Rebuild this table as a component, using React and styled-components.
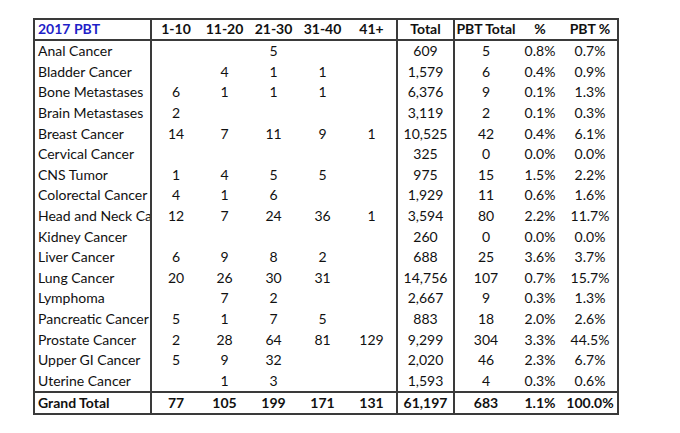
import React from 'react';
import styled, { createGlobalStyle } from 'styled-components';

const GlobalStyle = createGlobalStyle`
  html, body {
    margin: 0;
    padding: 0;
    background-color: #fff;
  }
  body {
    font-family: Lato, "Open Sans", "Liberation Sans", sans-serif;
    color: #111;
  }
`;

const Page = styled.div`
  width: 680px;
  height: 433px;
  padding: 18px 0 0 33px;
  box-sizing: border-box;
`;

const Table = styled.table`
  border-collapse: collapse;
  table-layout: fixed;
  width: 584px;
  border: solid 2px #3a3a3a;
  font-size: 14px;
`;

const HeadCell = styled.th`
  height: 18px;
  padding: 0 0 1px;
  font-weight: bold;
  text-align: ${(p) => (p.left ? 'left' : 'center')};
  padding-left: ${(p) => (p.left ? '3px' : '0')};
  color: ${(p) => (p.blue ? '#1f1fc8' : '#111')};
  border-bottom: solid 2px #3a3a3a;
  border-right: ${(p) => (p.divider ? 'solid 2px #3a3a3a' : 'none')};
  line-height: 18px;
  white-space: nowrap;
  overflow: hidden;
`;

const Cell = styled.td`
  height: 19.6px;
  padding: 0 0 1px;
  line-height: 19px;
  text-align: center;
  white-space: nowrap;
  overflow: hidden;
  border-right: ${(p) => (p.divider ? 'solid 2px #3a3a3a' : 'none')};
`;

const LabelCell = styled(Cell)`
  text-align: left;
  padding-left: 3px;
  text-overflow: clip;
`;

const TotalRow = styled.tr`
  td {
    font-weight: bold;
    border-top: solid 2px #3a3a3a;
    height: 17px;
  }
`;

const columns = [
  { key: 'label', title: '2017 PBT', width: 117 },
  { key: 'c1', title: '1-10', width: 49 },
  { key: 'c2', title: '11-20', width: 49 },
  { key: 'c3', title: '21-30', width: 49 },
  { key: 'c4', title: '31-40', width: 49 },
  { key: 'c5', title: '41+', width: 50 },
  { key: 'total', title: 'Total', width: 57 },
  { key: 'pbt', title: 'PBT Total', width: 63 },
  { key: 'pct', title: '%', width: 46 },
  { key: 'pbtPct', title: 'PBT %', width: 55 }
];

const dividers = ['label', 'c5', 'total'];

const rows = [
  ['Anal Cancer', '', '', '5', '', '', '609', '5', '0.8%', '0.7%'],
  ['Bladder Cancer', '', '4', '1', '1', '', '1,579', '6', '0.4%', '0.9%'],
  ['Bone Metastases', '6', '1', '1', '1', '', '6,376', '9', '0.1%', '1.3%'],
  ['Brain Metastases', '2', '', '', '', '', '3,119', '2', '0.1%', '0.3%'],
  ['Breast Cancer', '14', '7', '11', '9', '1', '10,525', '42', '0.4%', '6.1%'],
  ['Cervical Cancer', '', '', '', '', '', '325', '0', '0.0%', '0.0%'],
  ['CNS Tumor', '1', '4', '5', '5', '', '975', '15', '1.5%', '2.2%'],
  ['Colorectal Cancer', '4', '1', '6', '', '', '1,929', '11', '0.6%', '1.6%'],
  ['Head and Neck Cancer', '12', '7', '24', '36', '1', '3,594', '80', '2.2%', '11.7%'],
  ['Kidney Cancer', '', '', '', '', '', '260', '0', '0.0%', '0.0%'],
  ['Liver Cancer', '6', '9', '8', '2', '', '688', '25', '3.6%', '3.7%'],
  ['Lung Cancer', '20', '26', '30', '31', '', '14,756', '107', '0.7%', '15.7%'],
  ['Lymphoma', '', '7', '2', '', '', '2,667', '9', '0.3%', '1.3%'],
  ['Pancreatic Cancer', '5', '1', '7', '5', '', '883', '18', '2.0%', '2.6%'],
  ['Prostate Cancer', '2', '28', '64', '81', '129', '9,299', '304', '3.3%', '44.5%'],
  ['Upper GI Cancer', '5', '9', '32', '', '', '2,020', '46', '2.3%', '6.7%'],
  ['Uterine Cancer', '', '1', '3', '', '', '1,593', '4', '0.3%', '0.6%']
];

const grandTotal = ['Grand Total', '77', '105', '199', '171', '131', '61,197', '683', '1.1%', '100.0%'];

const renderCells = (values) =>
  values.map((value, i) => {
    const col = columns[i];
    const divider = dividers.includes(col.key);
    if (i === 0) {
      return (
        <LabelCell key={col.key} divider={divider ? 1 : 0}>
          {value}
        </LabelCell>
      );
    }
    return (
      <Cell key={col.key} divider={divider ? 1 : 0}>
        {value}
      </Cell>
    );
  });

export default function App() {
  return (
    <Page>
      <GlobalStyle />
      <Table>
        <colgroup>
          {columns.map((col) => (
            <col key={col.key} style={{ width: col.width }} />
          ))}
        </colgroup>
        <thead>
          <tr>
            {columns.map((col, i) => (
              <HeadCell
                key={col.key}
                left={i === 0 ? 1 : 0}
                blue={i === 0 ? 1 : 0}
                divider={dividers.includes(col.key) ? 1 : 0}
              >
                {col.title}
              </HeadCell>
            ))}
          </tr>
        </thead>
        <tbody>
          {rows.map((row) => (
            <tr key={row[0]}>{renderCells(row)}</tr>
          ))}
          <TotalRow>{renderCells(grandTotal)}</TotalRow>
        </tbody>
      </Table>
    </Page>
  );
}
